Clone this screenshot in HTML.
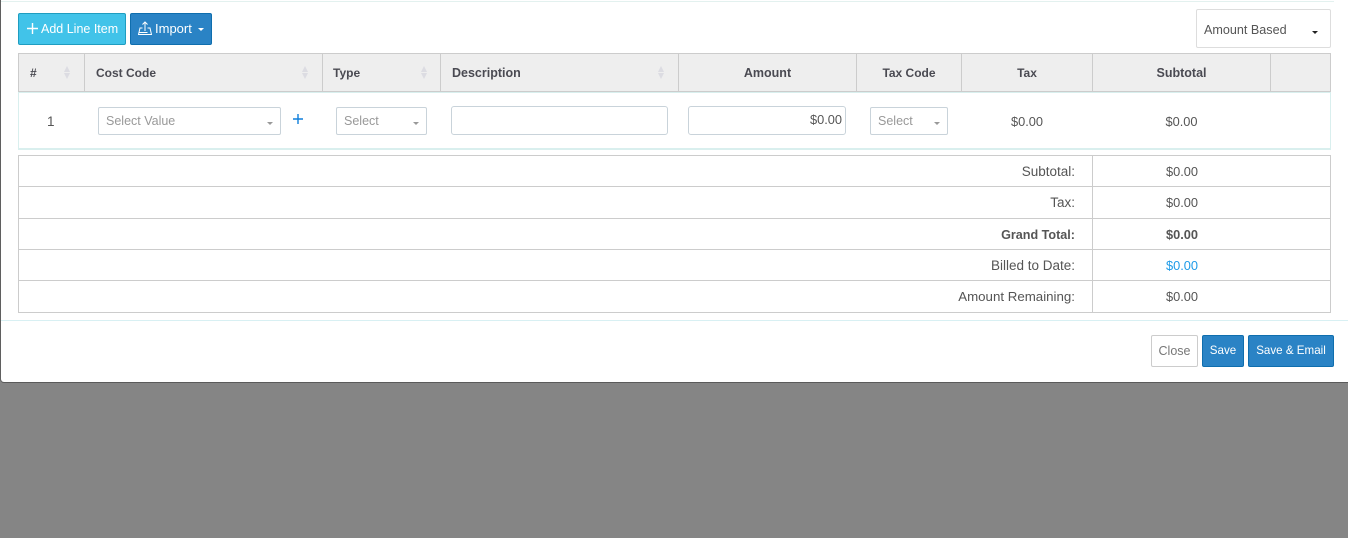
<!DOCTYPE html>
<html><head><meta charset="utf-8">
<style>
html,body{margin:0;padding:0;width:1348px;height:538px;overflow:hidden;background:#858585;font-family:"Liberation Sans",sans-serif;font-size:13px;color:#555}
.a{position:absolute;box-sizing:border-box}
.t{position:absolute;white-space:nowrap;line-height:18px}
.btn{position:absolute;box-sizing:border-box;border-radius:2px;color:#fff;border:1px solid #0f6eae;background:#2a83c5;white-space:nowrap;line-height:30px;text-align:center;font-size:11.6px}
.th{position:absolute;top:64px;line-height:18px;font-weight:bold;color:#4a4a52;font-size:12px;white-space:nowrap}
.c{text-align:center}
.v{position:absolute;width:1px;background:#ccc}
.h{position:absolute;height:1px;background:#ccc;left:18px;width:1313px}
.sel{position:absolute;box-sizing:border-box;border:1px solid #c9d3da;border-radius:2px;background:#fff;color:#999;line-height:27px;padding-left:7px;height:28px;top:107px;font-size:12.5px}
.car{position:absolute;width:0;height:0;border-left:3px solid transparent;border-right:3px solid transparent;border-top:3px solid #999}
.sort{position:absolute;width:6px;height:14px}
.sort:before{content:"";position:absolute;left:0;top:0;border-left:3.5px solid transparent;border-right:3.5px solid transparent;border-bottom:6px solid #dcdce2}
.sort:after{content:"";position:absolute;left:0;top:7px;border-left:3.5px solid transparent;border-right:3.5px solid transparent;border-top:6px solid #dcdce2}
.lab{position:absolute;right:273px;text-align:right;white-space:nowrap;line-height:18px;font-size:13.3px}
.val{position:absolute;left:1093px;width:178px;text-align:center;line-height:18px;font-size:12.8px}
</style></head><body>
<div class="a" style="left:0;top:0;width:1348px;height:383px;background:#fff;border-left:1px solid #5f5f5f;border-bottom:1px solid #5a5a5a;border-bottom-left-radius:4px"></div>
<div class="a" style="left:1px;top:1px;width:1333px;height:1px;background:#e3f1ef"></div>

<div class="btn" style="left:18px;top:13px;width:108px;height:32px;background:#41c3e9;border-color:#1f9dc0;font-size:12.5px">
<svg style="position:absolute;left:8px;top:9px" width="11" height="11" viewBox="0 0 11 11"><path d="M5.500 0V11M0 5.500H11" stroke="#fff" stroke-width="1.400" fill="none"/></svg>
<span style="position:absolute;left:22px;top:0">Add Line Item</span></div>
<div class="btn" style="left:130px;top:13px;width:82px;height:32px;font-size:13px">
<svg style="position:absolute;left:7px;top:7px" width="14" height="15" viewBox="0 0 14 15"><path d="M7 10V1M4.500 3.500L7 1l2.500 2.500M4.500 7H2L.5 13.500H13.500L12 7H9.500M.8 11.500H9.500" stroke="#fff" stroke-width="1" fill="none"/></svg>
<span style="position:absolute;left:24px;top:0">Import</span>
<div class="car" style="left:67px;top:14px;border-top-color:#fff"></div></div>

<div class="a" style="left:1196px;top:9px;width:135px;height:39px;border:1px solid #ddd;border-radius:2px"></div>
<div class="t" style="left:1204px;top:21px;color:#555;font-size:12.6px">Amount Based</div>
<div class="car" style="left:1312px;top:31px;border-top-color:#222"></div>

<div class="a" style="left:18px;top:53px;width:1313px;height:39px;background:#eee;border:1px solid #ccc"></div>
<div class="v" style="left:84px;top:53px;height:39px"></div>
<div class="v" style="left:322px;top:53px;height:39px"></div>
<div class="v" style="left:440px;top:53px;height:39px"></div>
<div class="v" style="left:678px;top:53px;height:39px"></div>
<div class="v" style="left:856px;top:53px;height:39px"></div>
<div class="v" style="left:961px;top:53px;height:39px"></div>
<div class="v" style="left:1092px;top:53px;height:39px"></div>
<div class="v" style="left:1270px;top:53px;height:39px"></div>
<div class="th" style="left:30px">#</div>
<div class="th" style="left:96px">Cost Code</div>
<div class="th" style="left:333px">Type</div>
<div class="th" style="left:452px;font-size:12.5px">Description</div>
<div class="th c" style="left:679px;width:177px;font-size:12.5px">Amount</div>
<div class="th c" style="left:857px;width:104px">Tax Code</div>
<div class="th c" style="left:962px;width:130px">Tax</div>
<div class="th c" style="left:1093px;width:177px;font-size:12.5px">Subtotal</div>
<div class="sort" style="left:64px;top:66px"></div>
<div class="sort" style="left:302px;top:66px"></div>
<div class="sort" style="left:421px;top:66px"></div>
<div class="sort" style="left:658px;top:66px"></div>

<div class="a" style="left:18px;top:92px;width:1313px;height:58px;border:1px solid #d9efee;border-bottom-width:2px"></div>
<div class="t" style="left:47px;top:113px;color:#555;font-size:13.5px">1</div>
<div class="sel" style="left:98px;width:183px">Select Value<div class="car" style="left:168px;top:14px"></div></div>
<svg style="position:absolute;left:293px;top:114px" width="10" height="10" viewBox="0 0 10 10"><path d="M5 0V10M0 5H10" stroke="#0f7fdc" stroke-width="1.400" fill="none"/></svg>
<div class="sel" style="left:336px;width:91px">Select<div class="car" style="left:76px;top:14px"></div></div>
<div class="a" style="left:451px;top:106px;width:217px;height:29px;border:1px solid #c9d3da;border-radius:3px"></div>
<div class="a" style="left:688px;top:106px;width:158px;height:29px;border:1px solid #c9d3da;border-radius:3px;text-align:right;padding-right:3px;line-height:26px;font-size:12.8px;color:#555">$0.00</div>
<div class="sel" style="left:870px;width:78px">Select<div class="car" style="left:63px;top:14px"></div></div>
<div class="t c" style="left:962px;width:130px;top:113px;font-size:12.8px">$0.00</div>
<div class="t c" style="left:1093px;width:177px;top:113px;font-size:12.8px">$0.00</div>

<div class="a" style="left:18px;top:155px;width:1313px;height:158px;border:1px solid #ccc"></div>
<div class="h" style="top:186px"></div>
<div class="h" style="top:218px"></div>
<div class="h" style="top:249px"></div>
<div class="h" style="top:280px"></div>
<div class="v" style="left:1092px;top:155px;height:158px"></div>
<div class="lab" style="top:163px;font-size:13.5px">Subtotal:</div><div class="val" style="top:163px">$0.00</div>
<div class="lab" style="top:194px;font-size:13.5px">Tax:</div><div class="val" style="top:194px">$0.00</div>
<div class="lab" style="top:226px;font-weight:bold;font-size:12.6px">Grand Total:</div><div class="val" style="top:226px;font-weight:bold">$0.00</div>
<div class="lab" style="top:257px;font-size:13.5px">Billed to Date:</div><div class="val" style="top:257px;color:#1e9be8">$0.00</div>
<div class="lab" style="top:288px">Amount Remaining:</div><div class="val" style="top:288px">$0.00</div>

<div class="a" style="left:1px;top:320px;width:1347px;height:1px;background:#d8f0f3"></div>
<div class="btn" style="left:1151px;top:335px;width:47px;height:32px;background:#fff;border-color:#ccc;color:#777;font-size:12.5px">Close</div>
<div class="btn" style="left:1202px;top:335px;width:42px;height:32px">Save</div>
<div class="btn" style="left:1248px;top:335px;width:86px;height:32px">Save &amp; Email</div>
</body></html>
